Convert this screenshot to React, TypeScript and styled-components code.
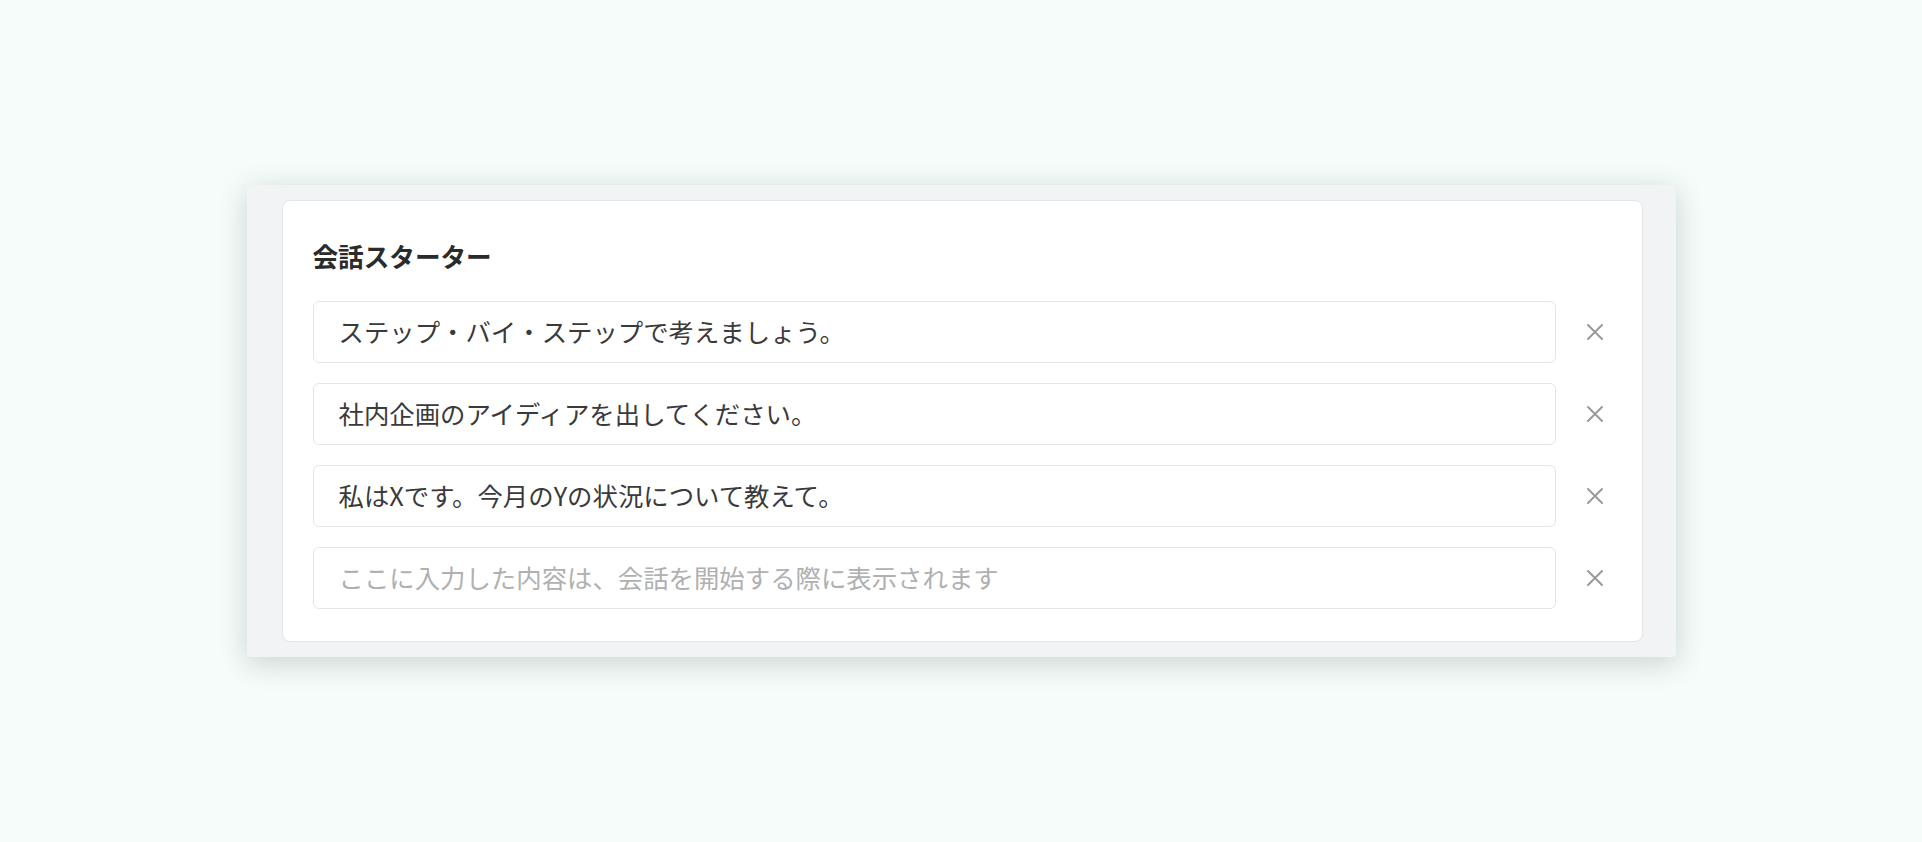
import React from "react";
import styled, { createGlobalStyle } from "styled-components";

const Global = createGlobalStyle`
  html, body { margin: 0; padding: 0; }
  body {
    background: #f5fcfa;
    font-family: "Noto Sans CJK JP", "Noto Sans", sans-serif;
  }
`;

const Page = styled.div`
  min-height: 100vh;
  display: flex;
  align-items: center;
  justify-content: center;
`;

const Panel = styled.div`
  width: 1429px;
  box-sizing: border-box;
  background: #f2f3f5;
  border-radius: 4px;
  padding: 15px 33px 15px 35px;
  box-shadow: 0 6px 28px rgba(40, 70, 60, 0.22);
`;

const Card = styled.section`
  background: #ffffff;
  border: 1px solid #e3e5e8;
  border-radius: 8px;
  padding: 37px 24px 32px 30px;
`;

const Title = styled.h2`
  margin: 0 0 27px;
  font-size: 25.6px;
  line-height: 36px;
  font-weight: 700;
  color: #2b2b2b;
`;

const List = styled.div`
  display: flex;
  flex-direction: column;
  gap: 20px;
`;

const Row = styled.div`
  display: flex;
  align-items: center;
  gap: 16px;
`;

const Input = styled.input`
  flex: 1;
  height: 62px;
  box-sizing: border-box;
  border: 1px solid #e3e5e8;
  border-radius: 6px;
  padding: 0 25px 2px;
  font-family: "Noto Sans CJK JP", "Noto Sans", sans-serif;
  font-size: 25.4px;
  font-weight: 400;
  color: #3a3a3a;
  background: #ffffff;
  outline: none;
  &::placeholder {
    color: #b0b0b0;
  }
`;

const RemoveButton = styled.button`
  width: 46px;
  height: 46px;
  border: none;
  background: transparent;
  padding: 0;
  display: flex;
  align-items: center;
  justify-content: center;
  color: #9a9a9a;
  cursor: pointer;
`;

const CloseIcon = () => (
  <svg width="18" height="18" viewBox="0 0 18 18" fill="none">
    <path d="M2 2 L16 16 M16 2 L2 16" stroke="currentColor" strokeWidth="2" strokeLinecap="round" />
  </svg>
);

const items = [
  "ステップ・バイ・ステップで考えましょう。",
  "社内企画のアイディアを出してください。",
  "私はXです。今月のYの状況について教えて。",
  "",
];

export default function App() {
  return (
    <>
      <Global />
      <Page>
        <Panel>
          <Card>
            <Title>会話スターター</Title>
            <List>
              {items.map((v, i) => (
                <Row key={i}>
                  <Input
                    defaultValue={v}
                    placeholder="ここに入力した内容は、会話を開始する際に表示されます"
                  />
                  <RemoveButton aria-label="削除">
                    <CloseIcon />
                  </RemoveButton>
                </Row>
              ))}
            </List>
          </Card>
        </Panel>
      </Page>
    </>
  );
}
